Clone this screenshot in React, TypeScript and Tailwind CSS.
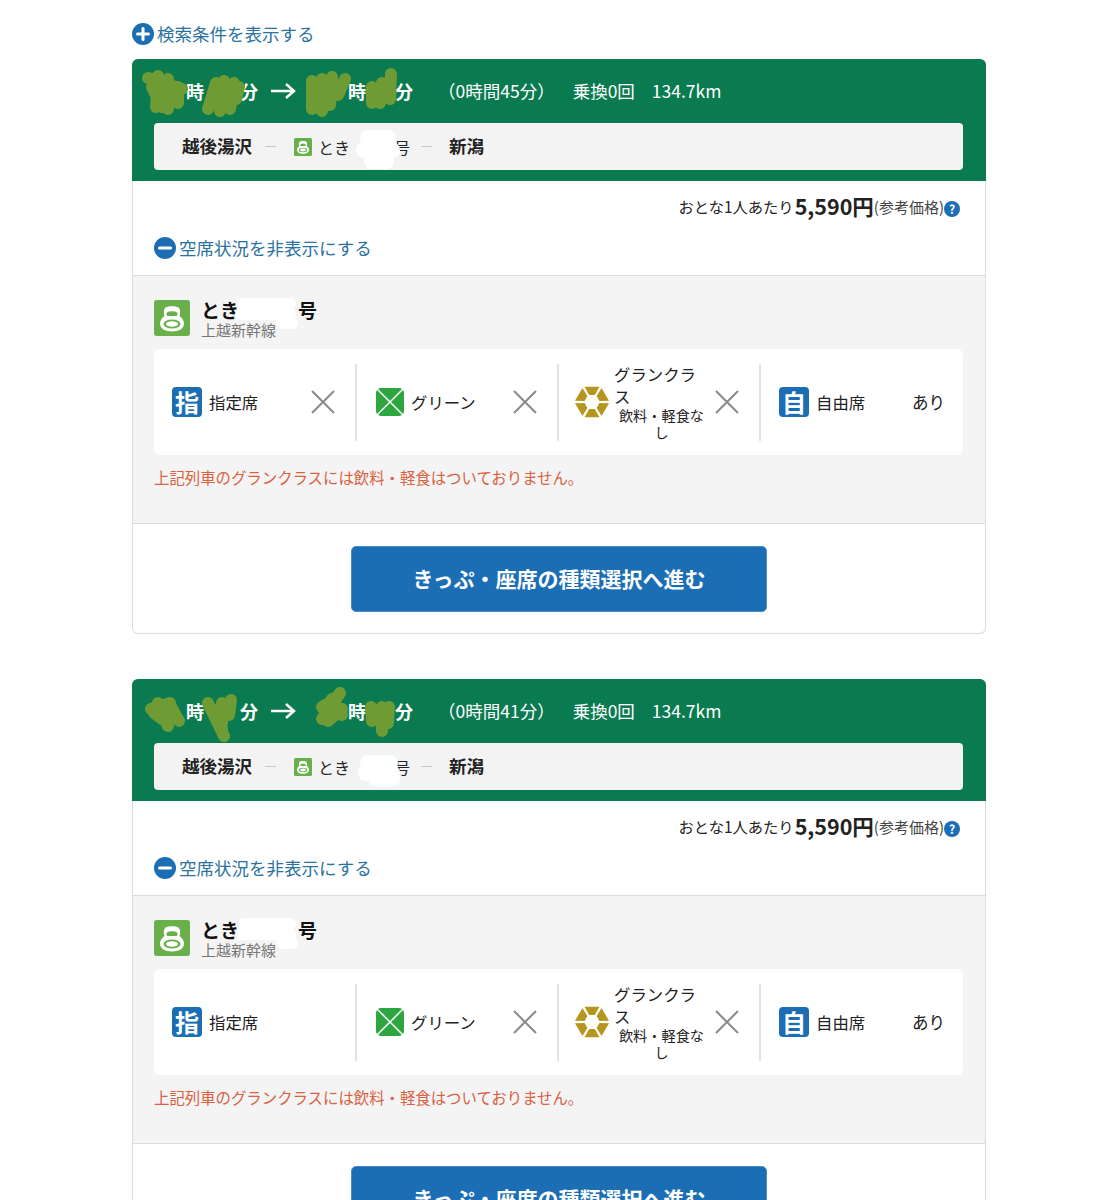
const hexSegments = [0, 60, 120, 180, 240, 300].map(a => {
  const pt = (r: number, d: number) => {
    const rad = (d * Math.PI) / 180
    return `${(18 + r * Math.cos(rad)).toFixed(1)},${(18 + r * Math.sin(rad)).toFixed(1)}`
  }
  return [pt(18, a + 4), pt(18, a + 56), pt(8, a + 52), pt(8, a + 8)].join(" ")
})

function ToggleIcon({ minus = false, size = 22 }: { minus?: boolean; size?: number }) {
  return (
    <svg width={size} height={size} viewBox="0 0 22 22" className="shrink-0">
      <circle cx="11" cy="11" r="11" fill="#1c6eb4" />
      <path d="M5.500 11h11" stroke="#fff" strokeWidth="3" strokeLinecap="round" />
      {!minus && <path d="M11 5.500v11" stroke="#fff" strokeWidth="3" strokeLinecap="round" />}
    </svg>
  )
}

function TrainIcon({ size = 36 }: { size?: number }) {
  return (
    <svg width={size} height={size} viewBox="0 0 36 36" className="shrink-0">
      <rect width="36" height="36" rx="3" fill="#6ab04a" />
      <path d="M11 8c2-2.500 12-2.500 14 0 1.500 2 1.500 6 .5 8 2.500 2 4.500 4.500 4.500 7.500 0 5-5 8-12 8s-12-3-12-8c0-3 2-5.500 4.500-7.500-1-2-1-6 .5-8z" fill="#fff" />
      <path d="M12.500 13.500c0-3 11-3 11 0 0 1.500-.5 2.500-1 2.500h-9c-.5 0-1-1-1-2.500z" fill="#6ab04a" />
      <ellipse cx="18" cy="24" rx="8.500" ry="4.500" fill="#6ab04a" />
      <ellipse cx="18" cy="24" rx="6" ry="2.800" fill="#fff" />
    </svg>
  )
}

function CrossIcon() {
  return (
    <svg width="24" height="24" viewBox="0 0 24 24" className="shrink-0">
      <path d="M1 1l22 22M23 1L1 23" stroke="#8a8a8a" strokeWidth="2" />
    </svg>
  )
}

function LetterIcon({ ch }: { ch: string }) {
  return (
    <span className="flex h-[30px] w-[30px] shrink-0 items-center justify-center rounded-[4px] bg-[#1c6eb4] text-[24px] font-bold leading-none text-white">
      {ch}
    </span>
  )
}

function GreenIcon() {
  return (
    <svg width="28" height="28" viewBox="0 0 28 28" className="shrink-0">
      <rect width="28" height="28" rx="5" fill="#2ea63f" />
      <path d="M1 1l26 26M27 1L1 27" stroke="#fff" strokeWidth="1.500" />
    </svg>
  )
}

function GranIcon() {
  return (
    <svg width="34" height="34" viewBox="0 0 36 36" className="shrink-0">
      {hexSegments.map((p, i) => <polygon key={i} points={p} fill="#b7961f" />)}
    </svg>
  )
}

function Seat({ icon, label, sub, mark, last, className }: { icon: React.ReactNode; label: string; sub?: string; mark?: "x" | "text"; last?: boolean; className: string }) {
  return (
    <div className={"flex h-[77px] items-center " + (last ? "" : "border-r-2 border-[#e2e2e2] pr-[20px] ") + className}>
      {icon}
      <div className={sub ? "ml-[5px] w-[94px] shrink-0 text-[16.400px] leading-[22px] text-[#222]" : "ml-[7px] min-w-0 flex-1 text-[16.400px] text-[#222]"}>
        {label}
        {sub && <div className="pl-px text-center text-[14.200px] leading-[17px]">{sub}</div>}
      </div>
      <div className="ml-auto flex items-center">
        {mark === "x" && <CrossIcon />}
        {mark === "text" && <span className="text-[16.500px] text-[#222]">あり</span>}
      </div>
    </div>
  )
}

function TrainCard({ duration, firstSeatFull, scribble, routeBlob }: { duration: string; firstSeatFull: boolean; scribble: string; routeBlob: string }) {
  return (
    <div className="w-[854px] rounded-[6px] border border-t-0 border-[#dcdcdc] bg-white">
      <div className="relative -mx-px h-[122px] rounded-t-[6px] bg-[#0a7a50] pt-[19px]">
        <div className="flex h-[26px] items-center pl-[54px] text-[18px] font-bold leading-none text-white">
          <span>時</span>
          <span className="ml-[36px]">分</span>
          <svg width="26" height="18" viewBox="0 0 26 18" className="ml-[13px]">
            <path d="M0 9h23M15 2l8 7-8 7" fill="none" stroke="#fff" strokeWidth="2.500" />
          </svg>
          <span className="ml-[51px]">時</span>
          <span className="ml-[29px]">分</span>
          <span className="ml-[25px] text-[17.500px] font-normal">{duration}</span>
          <span className="ml-[18px] text-[17.500px] font-normal">乗換0回</span>
          <span className="ml-[17px] text-[17.500px] font-normal">134.7km</span>
        </div>
        <svg className="absolute inset-0 h-full w-full" viewBox="0 0 854 122">
          <path d={scribble} fill="none" stroke="#6f9b34" strokeWidth="12" strokeLinecap="round" strokeLinejoin="round" />
        </svg>
        <div className="relative ml-[22px] mr-[23px] mt-[19px] flex h-[47px] items-center rounded-[4px] bg-[#f3f3f3] pl-[28px] text-[#222]">
          <span className="text-[17.500px] font-bold">越後湯沢</span>
          <span className="ml-[13px] h-px w-[11px] bg-[#c8c8c8]" />
          <span className="ml-[18px]"><TrainIcon size={18} /></span>
          <span className="ml-[6px] text-[16px]">とき</span>
          <span className="ml-[44px] text-[16px]">号</span>
          <span className="ml-[11px] h-px w-[11px] bg-[#c8c8c8]" />
          <span className="ml-[17px] text-[17.500px] font-bold">新潟</span>
          <svg className="absolute left-[196px] top-0 h-[60px] w-[70px]" viewBox="0 0 70 60">
            <path d={routeBlob} fill="none" stroke="#fff" strokeWidth="16" strokeLinecap="round" />
          </svg>
        </div>
      </div>

      <div className="flex h-[43px] items-center justify-end pr-[25px] pt-[8px] text-[15.300px] text-[#222]">
        <span>おとな1人あたり</span>
        <span className="mb-[2px] ml-px text-[21.500px] font-bold leading-[32px]">5,590円</span>
        <span className="mt-[1px] text-[15px] text-[#444]">(参考価格)</span>
        <span className="mt-[4px] flex h-[16px] w-[16px] items-center justify-center rounded-full bg-[#1c6eb4] text-[12px] font-bold leading-none text-white">?</span>
      </div>

      <div className="flex h-[40px] items-center gap-[3px] pl-[21px] pt-[8px] text-[17.500px] text-[#2a72a0]">
        <ToggleIcon minus />
        <span>空席状況を非表示にする</span>
      </div>

      <div className="mt-[11px] h-[249px] border-y border-[#dcdcdc] bg-[#f4f4f4] pl-[21px] pr-[22px] pt-[24px]">
        <div className="relative flex h-[36px] items-center gap-[11px]">
          <svg className="absolute left-[78px] top-[-4px] h-[36px] w-[70px]" viewBox="0 0 70 36">
            <path d="M12 8L58 8M10 18L58 18M50 27L60 27" fill="none" stroke="#fff" strokeWidth="12" strokeLinecap="round" />
          </svg>
          <TrainIcon />
          <div className="relative">
            <div className="text-[19px] font-bold leading-[22px] text-[#111]">
              とき<span className="ml-[59px]">号</span>
            </div>
            <div className="pt-px text-[15px] leading-[16px] text-[#777]">上越新幹線</div>
          </div>
        </div>
        <div className="mt-[13px] grid h-[106px] grid-cols-[185px_202px_202px_1fr] items-center rounded-[6px] bg-white px-[18px]">
          <Seat icon={<LetterIcon ch="指" />} label="指定席" mark={firstSeatFull ? "x" : undefined} className="" />
          <Seat icon={<GreenIcon />} label="グリーン" mark="x" className="pl-[19px]" />
          <Seat icon={<GranIcon />} label="グランクラス" sub="飲料・軽食なし" mark="x" className="pl-[16px]" />
          <Seat icon={<LetterIcon ch="自" />} label="自由席" mark="text" last className="pl-[18px]" />
        </div>
        <p className="mt-[11px] text-[15.400px] leading-[22px] text-[#d9613f]">上記列車のグランクラスには飲料・軽食はついておりません。</p>
      </div>

      <div className="flex h-[109px] items-center justify-center">
        <button className="h-[66px] w-[416px] rounded-[5px] border border-[#4a8cc4] bg-[#1c6eb4] text-[21px] font-bold text-white">
          きっぷ・座席の種類選択へ進む
        </button>
      </div>
    </div>
  )
}

export default function App() {
  return (
    <div className="h-[1200px] overflow-hidden bg-white font-['Noto_Sans_CJK_JP','Noto_Sans',sans-serif]">
      <div className="ml-[132px] w-[854px] pt-[22px]">
        <div className="mb-[13px] flex h-[24px] items-center gap-[3px] text-[17.500px] text-[#2a72a0]">
          <ToggleIcon />
          <span>検索条件を表示する</span>
        </div>
        <div className="flex flex-col gap-[45px]">
          <TrainCard
            duration="（0時間45分）"
            firstSeatFull
            routeBlob="M18 15L38 15M14 27L42 27M22 38L36 38"
            scribble="M16 19L50 30M26 17L24 48M36 20L36 50M46 28L46 44M20 28L30 48M84 24L76 50M92 22L88 52M102 24L98 50M107 28L104 40M180 22L180 50M190 20L190 52M200 18L198 46M213 20L206 36M240 28L240 44M250 24L248 44M259 15L258 40"
          />
          <TrainCard
            duration="（0時間41分）"
            firstSeatFull={false}
            routeBlob="M18 20L40 20M16 30L42 30M26 36L42 36"
            scribble="M19 30L38 24M26 24L36 47M38 26L47 42M22 34L30 40M76 24L92 57M90 24L90 44M99 21L97 36M80 30L90 50M190 40L208 14M190 28L204 20M196 42L210 30M200 20L210 36M239 28L240 42M250 28L250 52M257 28L256 44"
          />
        </div>
      </div>
    </div>
  )
}
